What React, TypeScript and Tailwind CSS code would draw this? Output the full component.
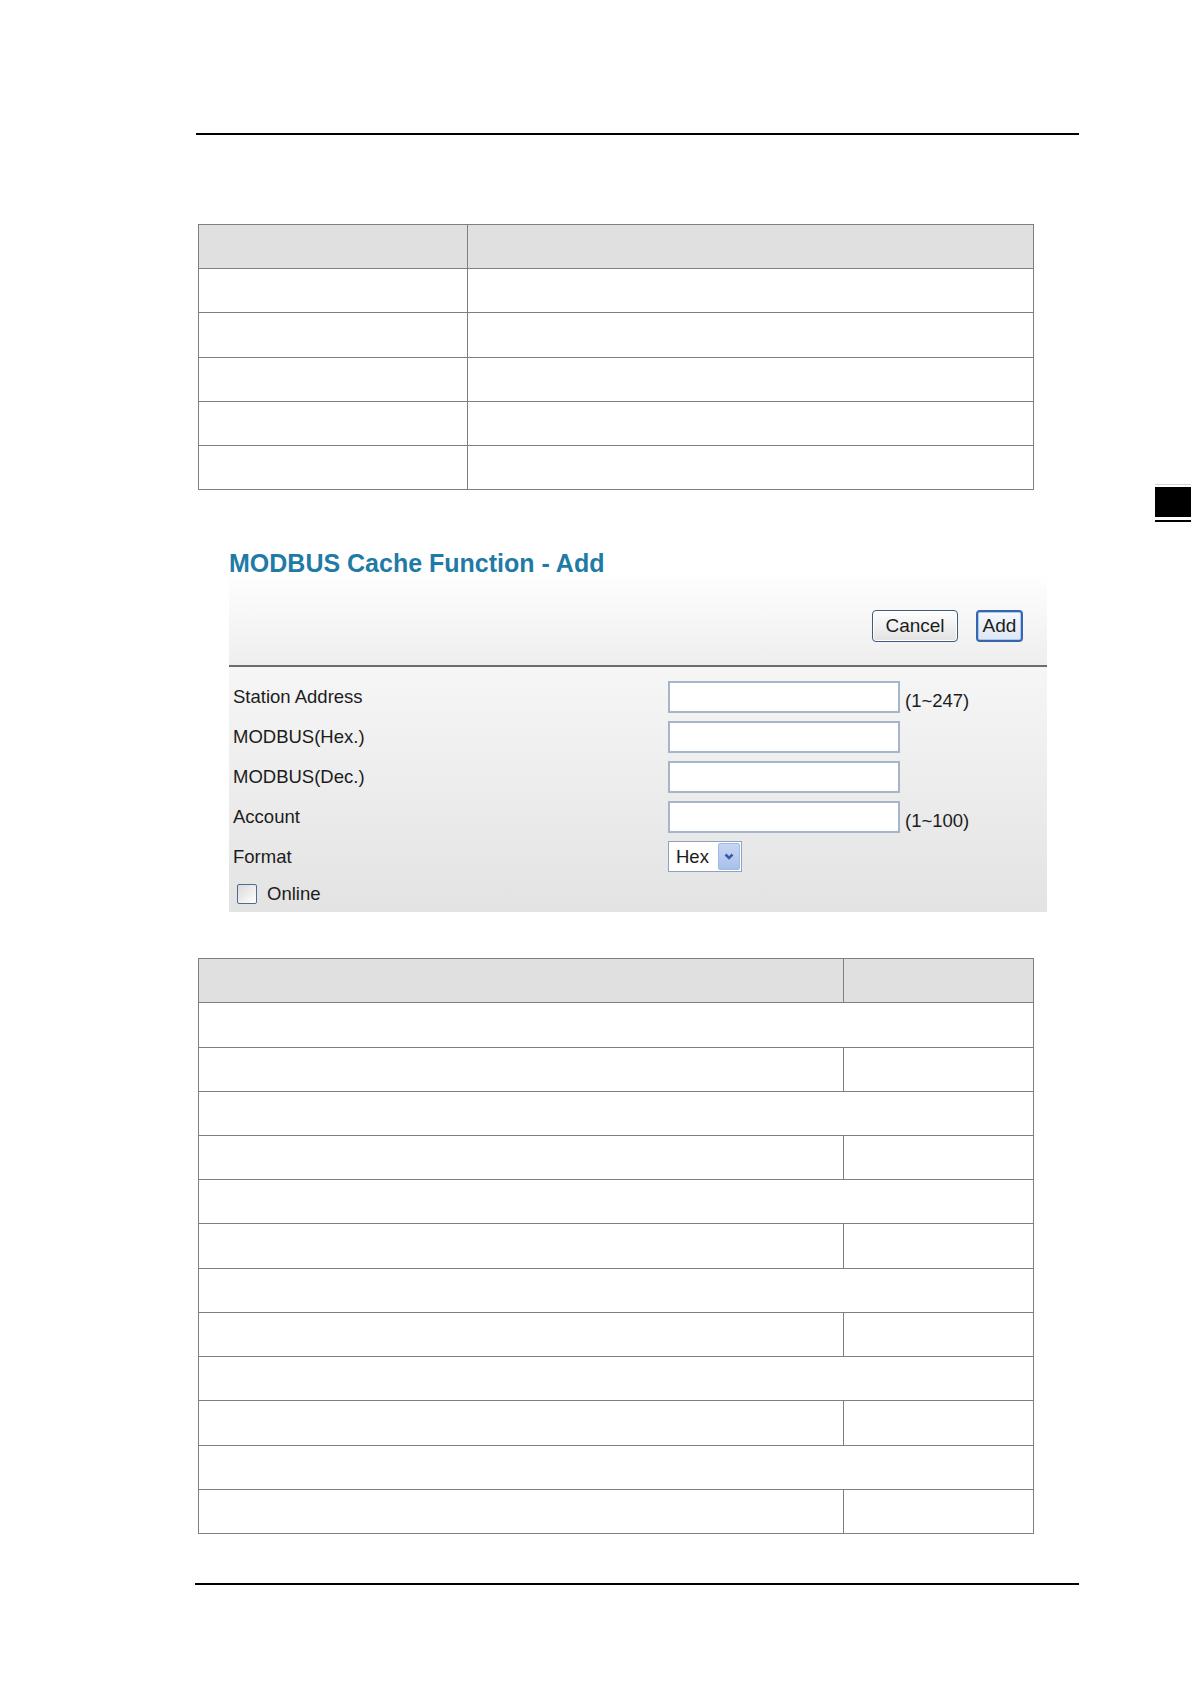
import React from "react";

const sans = "font-['Liberation_Sans',Arial,sans-serif]";

/** Empty bordered table; rows listed as "two" (two cells) or "span" (one wide cell). */
function BlankTable({
  firstCol,
  rows,
  rowH,
}: {
  firstCol: string;
  rows: ("two" | "span")[];
  rowH: string;
}) {
  return (
    <div className="ml-[198px] w-[836px] border border-[#7f7f7f]">
      <div className="flex h-[43.2px] bg-[#e0e0e0]">
        <div className={`${firstCol} border-r border-[#7f7f7f]`} />
        <div className="flex-1" />
      </div>
      {rows.map((r, i) => (
        <div key={i} className={`flex ${rowH} border-t border-[#7f7f7f]`}>
          {r === "two" ? (
            <>
              <div className={`${firstCol} border-r border-[#7f7f7f]`} />
              <div className="flex-1" />
            </>
          ) : (
            <div className="flex-1" />
          )}
        </div>
      ))}
    </div>
  );
}

function Field({ label, hint }: { label: string; hint?: string }) {
  return (
    <div className="flex h-[32px] items-center">
      <div className="w-[439px] pl-[4px] text-[18.5px] leading-[20px] text-[#1c1c1c]">{label}</div>
      <div className="h-[32px] w-[232px] border-2 border-[#a7b5ca] bg-white" />
      {hint && (
        <span className="ml-[5px] mt-[8px] text-[18.5px] leading-[20px] text-[#1c1c1c]">{hint}</span>
      )}
    </div>
  );
}

export default function App() {
  const table2: ("two" | "span")[] = [
    "span", "two", "span", "two", "span", "two",
    "span", "two", "span", "two", "span", "two",
  ];

  return (
    <div className={`relative min-h-[1684px] w-[1191px] bg-white pt-[133px] ${sans}`}>
      {/* header rule */}
      <div className="ml-[196px] h-[2px] w-[883px] bg-black" />

      <div className="mt-[89px]">
        <BlankTable firstCol="w-[269px]" rows={["two", "two", "two", "two", "two"]} rowH="h-[44.2px]" />
      </div>

      {/* chapter tab on the page edge */}
      <div className="ml-[1155px] mt-[-6px] w-[36px]">
        <div className="h-px bg-[#d4d4d4]" />
        <div className="mt-[2px] h-[30px] bg-black" />
        <div className="mt-[3px] h-[2px] bg-black" />
      </div>

      {/* MODBUS Cache Function - Add panel */}
      <div className="ml-[229px] mt-[18px] w-[818px]">
        <div className="bg-gradient-to-b from-white from-25% to-[#eeeeee] pt-[9px] pb-[23px]">
          <div className="h-[28px] text-[25px] font-bold leading-[28px] text-[#1f7ba6]">
            MODBUS Cache Function - Add
          </div>
          <div className="mt-[33px] flex justify-end gap-[18px] pr-[24px]">
            <button className="h-[32px] w-[86px] rounded-[4px] border border-[#3f5c7d] bg-gradient-to-b from-white to-[#e2e2e2] text-[19px] leading-[20px] text-[#1c1c1c] shadow-[inset_0_0_0_1px_#ffffff]">
              Cancel
            </button>
            <button className="h-[32px] w-[47px] rounded-[4px] border-2 border-[#3866ae] bg-gradient-to-b from-[#f6f9fd] to-[#dde6f2] text-[19px] leading-[20px] text-[#1c1c1c] shadow-[inset_0_0_0_1px_#a9c9f0]">
              Add
            </button>
          </div>
        </div>
        <div className="h-[2px] bg-[#6b6b6b]" />

        <div className="bg-gradient-to-b from-[#f6f6f6] to-[#e3e3e3] pt-[14px] pb-[8px]">
          <div className="flex flex-col gap-[8px]">
            <Field label="Station Address" hint="(1~247)" />
            <Field label="MODBUS(Hex.)" />
            <Field label="MODBUS(Dec.)" />
            <Field label="Account" hint="(1~100)" />
            <div className="flex h-[31px] items-center">
              <div className="w-[439px] pl-[4px] text-[18.5px] leading-[20px] text-[#1c1c1c]">Format</div>
              <div className="flex h-[31px] w-[74px] items-center border border-[#8ea3c2] bg-white pl-[7px] pr-[1px]">
                <span className="text-[18.5px] leading-[20px] text-[#1c1c1c]">Hex</span>
                <span className="ml-auto flex h-[27px] w-[22px] items-center justify-center rounded-[2px] border border-[#a3b9e3] bg-gradient-to-b from-[#c6d7f4] to-[#a8c0eb]">
                  <svg width="10" height="7" viewBox="0 0 10 7">
                    <path d="M1.5 1.5 L5 5 L8.5 1.5" stroke="#3a5ba3" strokeWidth="2.5" fill="none" />
                  </svg>
                </span>
              </div>
            </div>
          </div>
          <div className="mt-[12px] flex h-[20px] items-center pl-[8px]">
            <span className="h-[20px] w-[20px] rounded-[2px] border border-[#4d6b95] bg-gradient-to-br from-[#dadada] to-white" />
            <span className="ml-[10px] text-[18.5px] leading-[20px] text-[#1c1c1c]">Online</span>
          </div>
        </div>
      </div>

      <div className="mt-[46px]">
        <BlankTable firstCol="w-[645px]" rows={table2} rowH="h-[44.23px]" />
      </div>

      {/* footer rule */}
      <div className="ml-[195px] mt-[49px] h-[2px] w-[884px] bg-black" />
    </div>
  );
}
